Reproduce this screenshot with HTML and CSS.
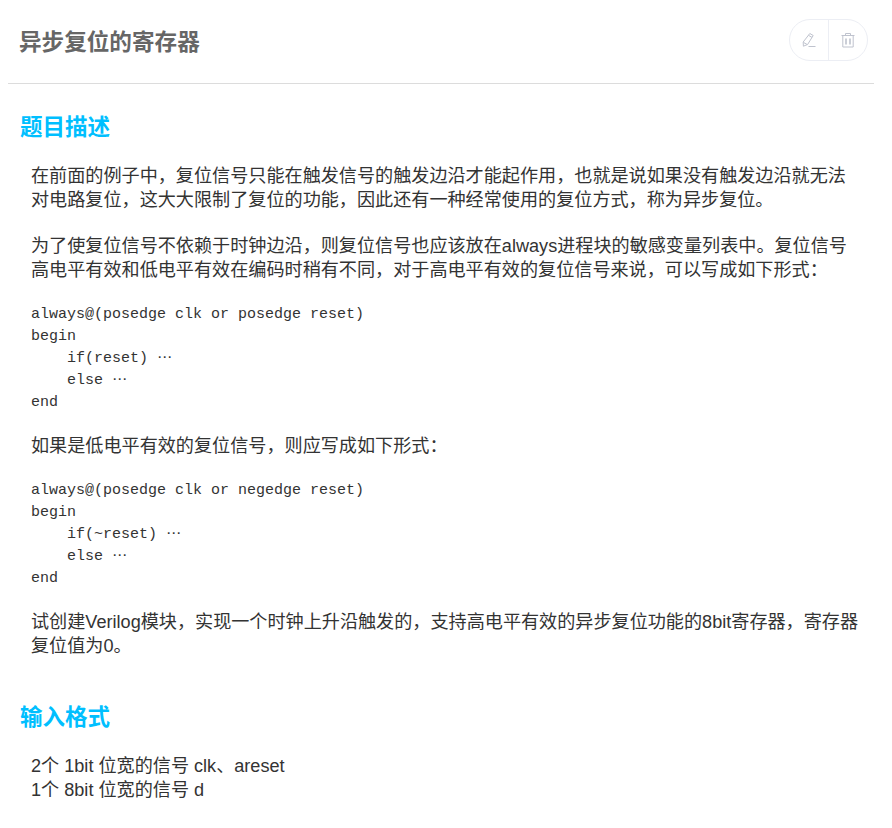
FILE: index.html
```html
<!DOCTYPE html>
<html lang="zh-CN">
<head>
<meta charset="utf-8">
<title>异步复位的寄存器</title>
<link rel="stylesheet" href="styles.css">
</head>
<body>
<header class="head">
  <h1 class="title">异步复位的寄存器</h1>
  <div class="actions">
    <button class="act act-left" aria-label="编辑">
      <svg width="16" height="16" viewBox="0 0 16 16" fill="none" stroke="#bfc3ce" stroke-width="1"><path d="M8.8 1.5l3.4 2-5.6 9-4.2 1.7-.2-4.2z"/><path d="M7.6 3.4l3.4 2M2.6 10.5l3.6 2"/><path d="M7.5 14.5h7"/></svg>
    </button>
    <button class="act" aria-label="删除">
      <svg width="16" height="16" viewBox="0 0 16 16" fill="none" stroke="#bfc3ce" stroke-width="1"><path d="M1.5 3.5h13M5.5 3.5v-2h5v2M2.8 3.5v11.5h10.4V3.5"/><path d="M6 6.5v6M10 6.5v6" stroke-width="1.6"/></svg>
    </button>
  </div>
</header>
<main class="content">
  <h2 class="section">题目描述</h2>
  <div class="body">
    <p class="para">在前面的例子中，复位信号只能在触发信号的触发边沿才能起作用，也就是说如果没有触发边沿就无法对电路复位，这大大限制了复位的功能，因此还有一种经常使用的复位方式，称为异步复位。</p>
    <p class="para">为了使复位信号不依赖于时钟边沿，则复位信号也应该放在always进程块的敏感变量列表中。复位信号高电平有效和低电平有效在编码时稍有不同，对于高电平有效的复位信号来说，可以写成如下形式：</p>
    <pre class="code">always@(posedge clk or posedge reset)
begin
    if(reset) ⋯
    else ⋯
end</pre>
    <p class="para">如果是低电平有效的复位信号，则应写成如下形式：</p>
    <pre class="code">always@(posedge clk or negedge reset)
begin
    if(~reset) ⋯
    else ⋯
end</pre>
    <p class="para">试创建Verilog模块，实现一个时钟上升沿触发的，支持高电平有效的异步复位功能的8bit寄存器，寄存器复位值为0。</p>
  </div>
  <h2 class="section section-next">输入格式</h2>
  <div class="body">
    <p class="para">2个 1bit 位宽的信号 clk、areset<br>1个 8bit 位宽的信号 d</p>
  </div>
</main>
</body>
</html>
```
FILE: styles.css
```css
* { box-sizing: border-box; }
html, body { margin: 0; padding: 0; background: #fff; }
body {
  font-family: "Liberation Sans", "Noto Sans CJK SC", sans-serif;
  color: #333;
  height: 828px;
  overflow: hidden;
}
.head {
  margin: 0 18px 0 8px;
  height: 84px;
  border-bottom: 1px solid #dcdcdc;
  display: flex;
  align-items: center;
  justify-content: space-between;
  padding: 0 0 0 11px;
  position: relative;
}
.title {
  margin: 0 0 2px;
  font-size: 22.6px;
  font-weight: 700;
  color: #666;
}
.actions {
  display: flex;
  width: 79px;
  height: 42px;
  border: 1px solid #eceef4;
  border-radius: 21px;
  position: absolute;
  right: 6px;
  top: 19px;
  background: #fff;
}
.act {
  flex: 1;
  border: 0;
  background: none;
  padding: 0;
  display: flex;
  align-items: center;
  justify-content: center;
}
.act-left { border-right: 1px solid #eceef4; }
.content { padding: 0 30px 0 20px; }
.section {
  margin: 28px 0 0;
  font-size: 22.5px;
  line-height: 32px;
  font-weight: 700;
  color: #00bfff;
}
.section-next { margin-top: 44px; }
.body { padding: 20px 0 0 11px; }
.para {
  margin: 0 0 22px;
  font-size: 18.13px;
  line-height: 24px;
}
.code {
  margin: 0 0 20px;
  font-family: "Liberation Mono", "DejaVu Sans", monospace;
  font-size: 15px;
  line-height: 22px;
  color: #333;
}
```
